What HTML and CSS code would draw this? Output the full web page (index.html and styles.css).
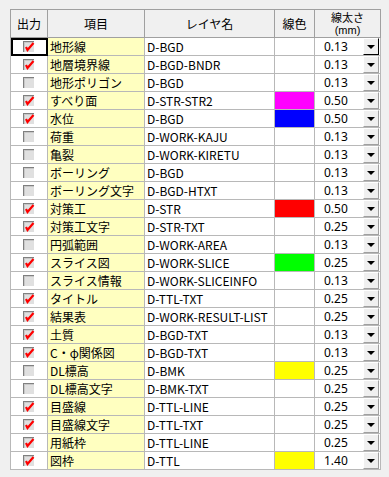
FILE: index.html
```html
<!DOCTYPE html>
<html lang="ja">
<head>
<meta charset="utf-8">
<link rel="stylesheet" href="styles.css">
</head>
<body>
<div class="wrap">
<table class="grid">
<colgroup><col class="c1"><col class="c2"><col class="c3"><col class="c4"><col class="c5"></colgroup>
<thead>
<tr><th>出力</th><th>項目</th><th>レイヤ名</th><th>線色</th><th class="thw"><span class="l1">線太さ</span><span class="mm">(mm)</span></th></tr>
</thead>
<tbody id="body"></tbody>
</table>
</div>
<script src="app.js"></script>
</body>
</html>
```
FILE: styles.css
```css
html, body { margin: 0; padding: 0; background: #f0f0f0; }
body { font-family: "Noto Sans CJK JP", "Noto Sans", sans-serif; font-size: 12px; color: #000; }
.wrap { padding: 9px 0 0 10px; }
.grid { border-collapse: collapse; border: 1px solid #6a6a6a; background: #fff; table-layout: fixed; width: 371px; }
.c1 { width: 37px; } .c2 { width: 97px; } .c3 { width: 130px; } .c4 { width: 40px; } .c5 { width: 66px; }
.grid th { background: #f0f0f0; font-weight: normal; height: 27px; padding: 0; border: 1px solid #a0a0a0; font-size: 12px; line-height: 13px; }
.grid th.thw { line-height: 11px; }
.l1 { display: block; font-size: 11px; line-height: 13px; }
.mm { display: block; font-family: "Liberation Sans Narrow", "Liberation Sans", sans-serif; font-size: 11px; line-height: 13px; }
.grid td { height: 17px; padding: 0; border: 1px solid #b8b8b8; line-height: 15px; white-space: nowrap; overflow: hidden; }
.grid td.chk { text-align: center; }
.grid td.chk.focus { outline: 2px solid #000; outline-offset: -2px; }
.chk svg { display: block; margin: 0 auto; }
.grid td.name { background: #ffffc0; padding-left: 2px; }
.grid td.layer { padding-left: 2px; }
.grid td.wid { padding: 0; }
.wcell { display: flex; align-items: center; height: 17px; }
.wval { flex: 1; padding-left: 9px; font-family: "Liberation Sans Narrow", "Noto Sans", sans-serif; font-size: 12px; }
.btn { width: 16px; height: 17px; margin-right: 1px; background: #f0f0f0; border-top: 1px solid #fff; border-left: 1px solid #fff; border-right: 1px solid #a0a0a0; border-bottom: 1px solid #a0a0a0; display: flex; align-items: center; justify-content: center; box-sizing: border-box; }
.btn.dark { border-right-color: #000; border-bottom-color: #000; }
.tri { width: 0; height: 0; border-left: 4px solid transparent; border-right: 4px solid transparent; border-top: 4px solid #000; }
```
FILE: app.js
```js
var rows = [
 [1,"地形線","D-BGD","","0.13"],
 [1,"地層境界線","D-BGD-BNDR","","0.13"],
 [0,"地形ポリゴン","D-BGD","","0.13"],
 [1,"すべり面","D-STR-STR2","#ff00ff","0.50"],
 [1,"水位","D-BGD","#0000ff","0.50"],
 [0,"荷重","D-WORK-KAJU","","0.13"],
 [0,"亀裂","D-WORK-KIRETU","","0.13"],
 [0,"ボーリング","D-BGD","","0.13"],
 [0,"ボーリング文字","D-BGD-HTXT","","0.13"],
 [1,"対策工","D-STR","#ff0000","0.50"],
 [1,"対策工文字","D-STR-TXT","","0.25"],
 [0,"円弧範囲","D-WORK-AREA","","0.13"],
 [1,"スライス図","D-WORK-SLICE","#00ff00","0.25"],
 [0,"スライス情報","D-WORK-SLICEINFO","","0.13"],
 [1,"タイトル","D-TTL-TXT","","0.25"],
 [1,"結果表","D-WORK-RESULT-LIST","","0.25"],
 [1,"土質","D-BGD-TXT","","0.13"],
 [1,"C・φ関係図","D-BGD-TXT","","0.13"],
 [0,"DL標高","D-BMK","#ffff00","0.25"],
 [0,"DL標高文字","D-BMK-TXT","","0.25"],
 [1,"目盛線","D-TTL-LINE","","0.25"],
 [1,"目盛線文字","D-TTL-TXT","","0.25"],
 [1,"用紙枠","D-TTL-LINE","","0.25"],
 [1,"図枠","D-TTL","#ffff00","1.40"]
];
function box(on){
  var s='<svg width="12" height="12" viewBox="0 0 12 12">'+
  '<rect x="0" y="0" width="12" height="12" fill="#ffffff"/>'+
  '<rect x="0" y="0" width="11" height="11" fill="#808080"/>'+
  '<rect x="1" y="1" width="10" height="10" fill="#c8c8c8"/>'+
  '<rect x="2" y="2" width="9" height="9" fill="#e0e0e0"/>';
  if(on) s+='<path d="M3 6 L4.5 9 L10.5 2" fill="none" stroke="#ff0000" stroke-width="2.2"/>';
  return s+'</svg>';
}
var tb=document.getElementById('body'), h='';
rows.forEach(function(r,i){
  h+='<tr><td class="chk'+(i===0?' focus':'')+'">'+box(r[0])+'</td>'+
     '<td class="name">'+r[1]+'</td>'+
     '<td class="layer">'+r[2]+'</td>'+
     '<td class="col"'+(r[3]?' style="background:'+r[3]+'"':'')+'></td>'+
     '<td class="wid"><div class="wcell"><span class="wval">'+r[4]+'</span><span class="btn'+(i===0?' dark':'')+'"><span class="tri"></span></span></div></td></tr>';
});
tb.innerHTML=h;
```
